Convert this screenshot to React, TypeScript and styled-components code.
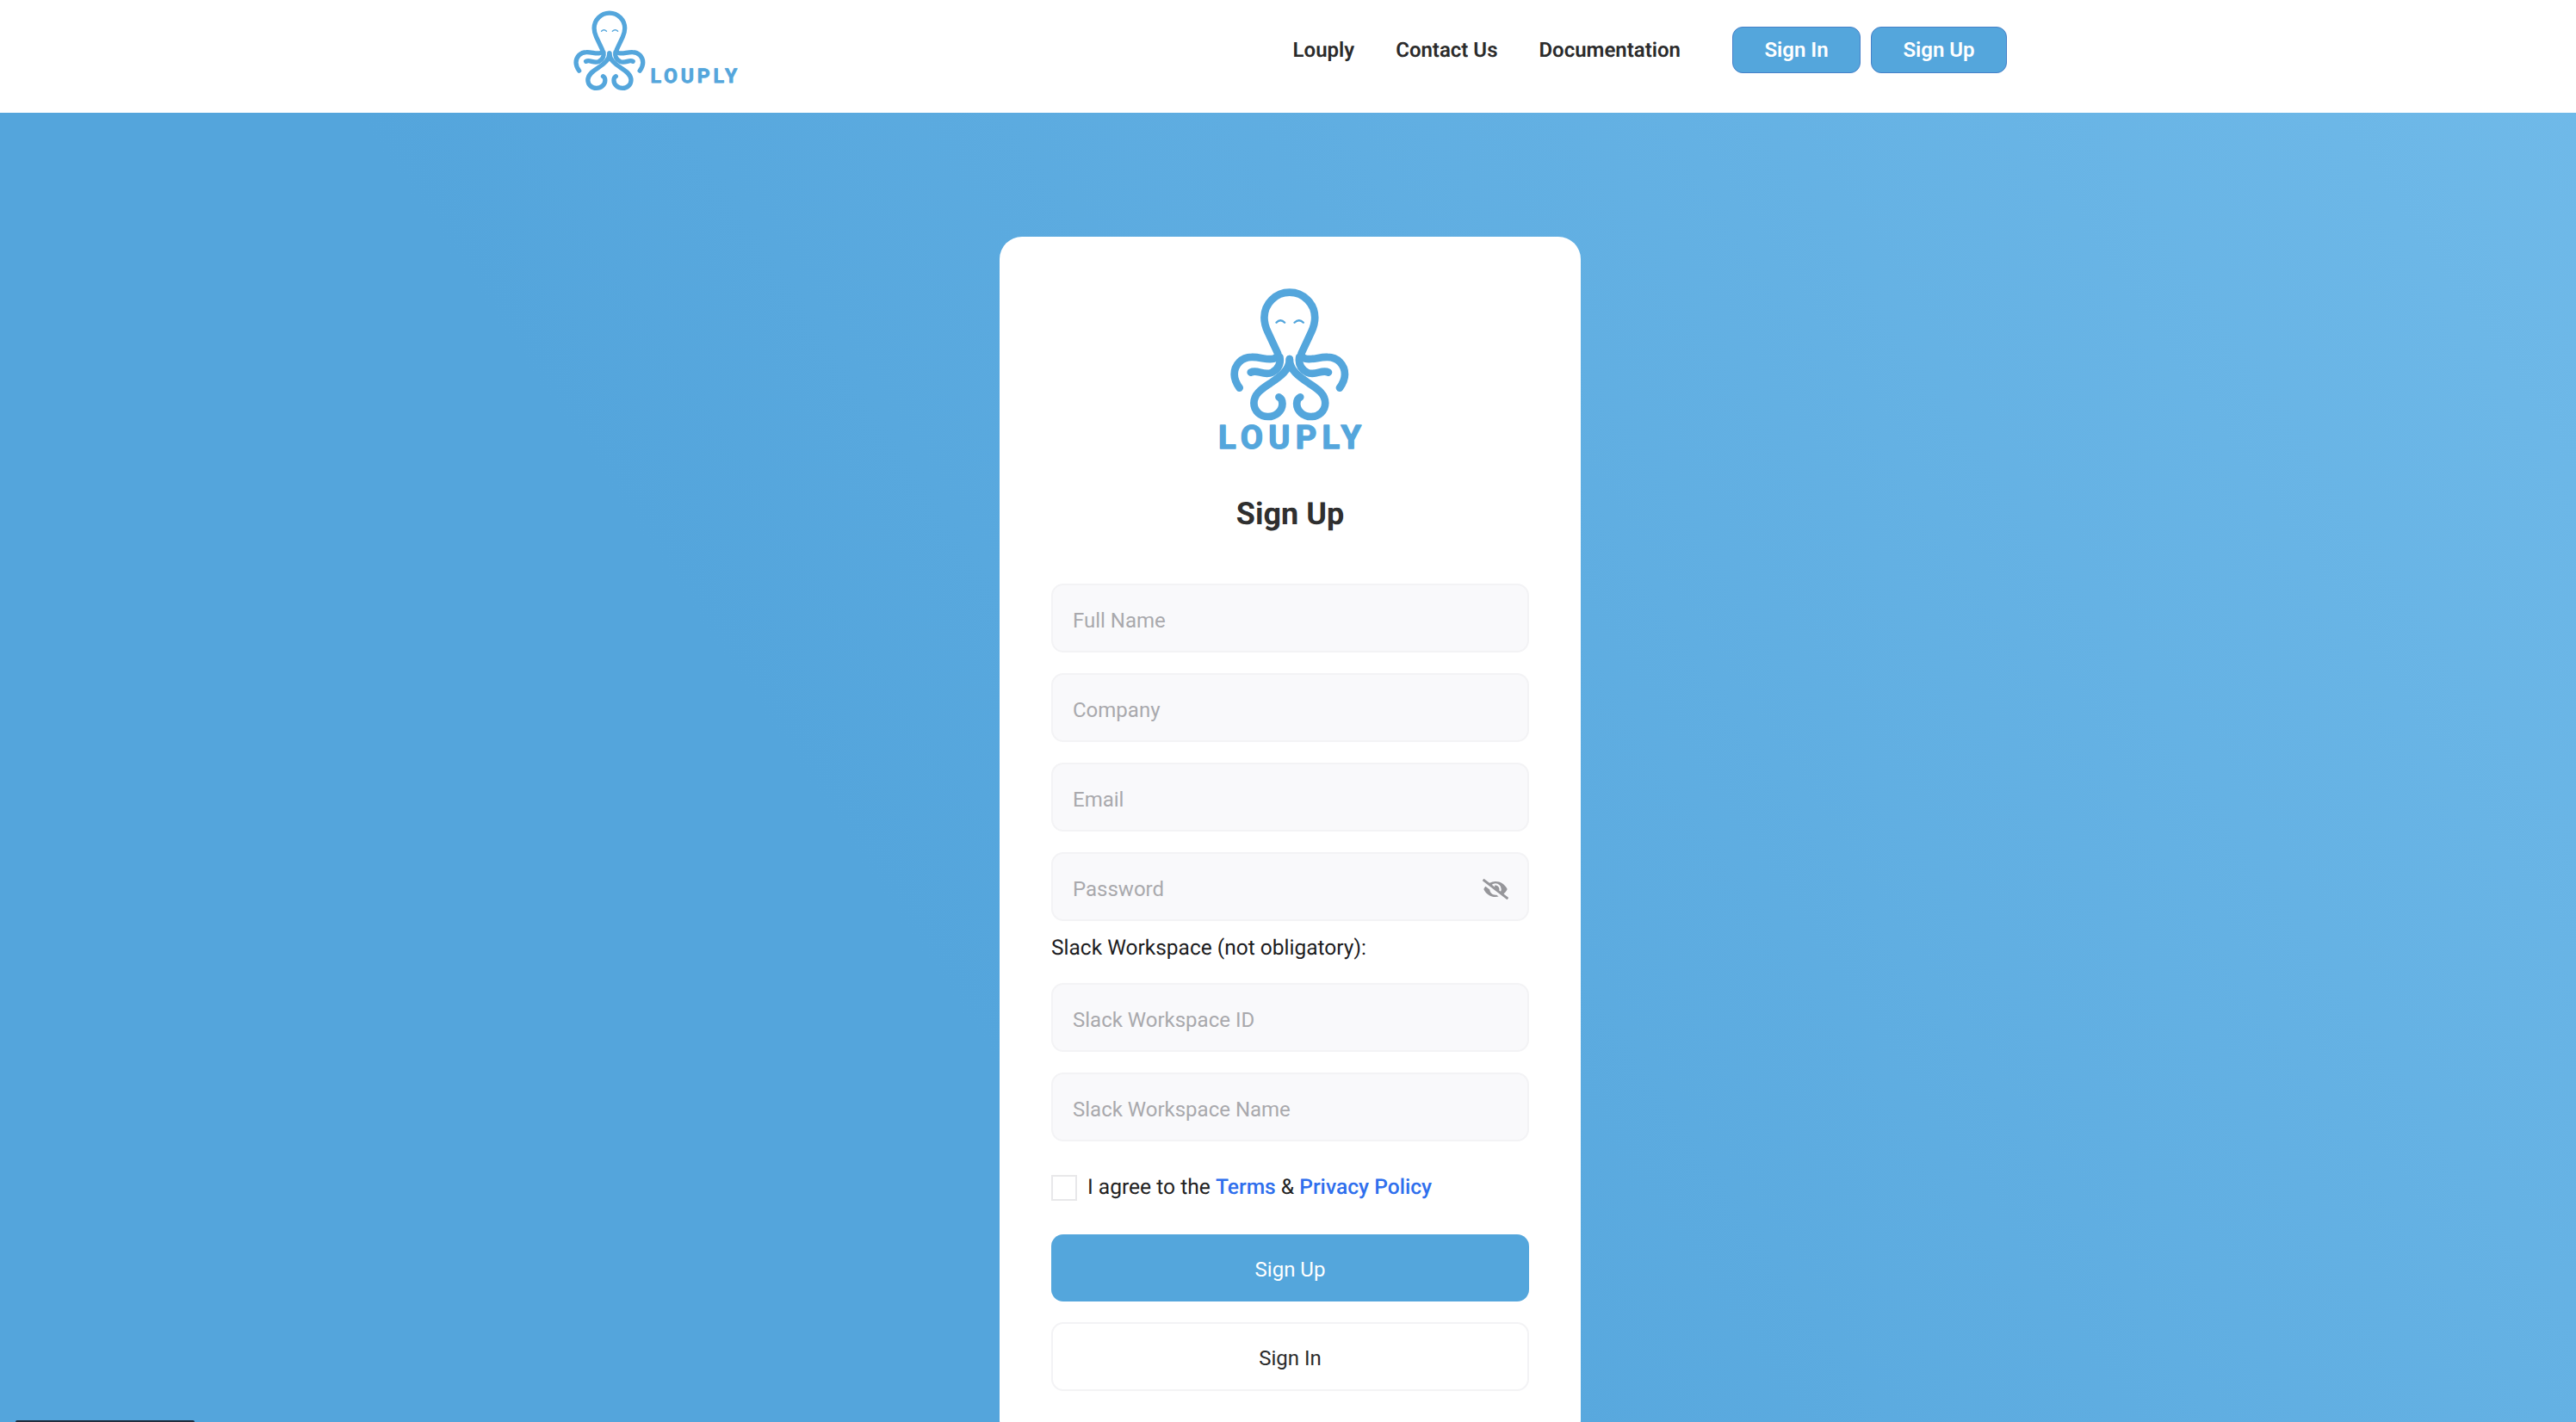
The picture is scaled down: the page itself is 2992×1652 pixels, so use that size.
import React from "react";
import styled, { createGlobalStyle } from "styled-components";
import { FaEyeSlash } from "react-icons/fa";

const BLUE = "#54a6dc";

const Global = createGlobalStyle`
  html, body { margin: 0; padding: 0; height: 100%; overflow: hidden; }
  body { font-family: Roboto, "Liberation Sans", sans-serif; background: ${BLUE}; text-rendering: geometricPrecision; }
  * { box-sizing: border-box; }
`;

const Page = styled.div`
  position: relative;
  height: 1652px;
  overflow: hidden;
  display: flex;
  flex-direction: column;
  background: linear-gradient(56deg, #54a5dc 0%, #54a5dc 35%, #70bae9 100%);
`;

const Header = styled.header`
  flex: none;
  height: 131px;
  background: #fff;
  display: flex;
  align-items: flex-start;
  padding: 0 661px 0 665px;
`;

const Brand = styled.a`
  display: flex;
  align-items: flex-end;
  gap: 2px;
  margin-top: 11px;
  height: 96px;
`;

const BrandWord = styled.span`
  display: block;
  margin-bottom: 10px;
`;

const Nav = styled.nav`
  margin-left: auto;
  display: flex;
  align-items: center;
  height: 116px;
`;

const NavLink = styled.a`
  font-size: 24px;
  font-weight: 600;
  color: #2b2b2b;
  margin-right: 48px;
  &:last-of-type { margin-right: 60px; }
`;

const NavButton = styled.button<{ $w: number }>`
  height: 54px;
  width: ${(p) => p.$w}px;
  margin-left: ${(p) => (p.$w > 150 ? 12 : 0)}px;
  background: ${BLUE};
  color: #fff;
  border: 1.5px solid #4580c8;
  border-radius: 12px;
  font: 600 24px Roboto, sans-serif;
`;

const Main = styled.main`
  flex: 1;
  display: flex;
  justify-content: center;
  padding: 144px 0 0 5px;
`;

const Card = styled.section`
  flex: none;
  width: 675px;
  height: 1400px;
  background: #fff;
  border-radius: 26px;
  padding: 58px 60px 0;
  display: flex;
  flex-direction: column;
`;

const CardLogo = styled.div`
  display: flex;
  flex-direction: column;
  align-items: center;
  gap: 2px;
  padding-right: 2px;
`;

const Title = styled.h1`
  margin: 53px 0 0;
  text-align: center;
  font-size: 36px;
  line-height: 44px;
  font-weight: 700;
  color: #2f2f2f;
`;

const Form = styled.form`
  margin-top: 59px;
  display: flex;
  flex-direction: column;
`;

const Field = styled.div`
  position: relative;
  height: 80px;
  margin-bottom: 24px;
  &.tight { margin-bottom: 0; }
`;

const Input = styled.input`
  width: 100%;
  height: 100%;
  padding: 6px 23px 0;
  background: #f9f9fb;
  border: 2px solid #f3f3f5;
  border-radius: 14px;
  font: 400 24px Roboto, sans-serif;
  color: #222;
  &::placeholder { color: #a9a9ad; opacity: 1; }
`;

const EyeButton = styled.span`
  position: absolute;
  right: 24px;
  top: 31px;
  display: flex;
  color: #96969a;
  & svg { width: 30px; height: 24px; }
`;

const SectionLabel = styled.div`
  font-size: 24.5px;
  line-height: 30px;
  color: #1d1d1f;
  margin: 16px 0 26px;
`;

const AgreeRow = styled.label`
  display: flex;
  align-items: center;
  gap: 12px;
  margin: 39px 0 39px;
  font-size: 24.6px;
  line-height: 30px;
  color: #222;
`;

const Check = styled.input`
  appearance: none;
  width: 30px;
  height: 30px;
  margin: 0;
  background: #fff;
  border: 2px solid #e8e8ea;
`;

const TextLink = styled.a`
  color: #2f6fed;
  font-weight: 500;
`;

const PrimaryButton = styled.button`
  height: 78px;
  padding-top: 6px;
  background: ${BLUE};
  color: #fff;
  border: 0;
  border-radius: 14px;
  font: 400 24px Roboto, sans-serif;
`;

const SecondaryButton = styled.button`
  height: 80px;
  margin-top: 24px;
  padding-top: 6px;
  background: #fff;
  color: #2b2b2b;
  border: 2px solid #f3f3f5;
  border-radius: 14px;
  font: 400 24px Roboto, sans-serif;
`;

const CornerBar = styled.div`
  position: absolute;
  left: 18px;
  bottom: 0;
  width: 208px;
  height: 2px;
  background: #1f2d3d;
  border-radius: 3px 3px 0 0;
`;

const Octopus = ({ width }: { width: number }) => (
  <svg width={width} viewBox="140 40 425 475" fill="none" stroke={BLUE} strokeWidth="26" strokeLinecap="round" strokeLinejoin="round">
    <path d="M178 392C168 378 160 362 160 345C160 312 185 285 220 285C250 284 272 296 296 291C305 289 312 283 311 272L276 197C268 180 264 165 264 148C264 100 303 60 352 60C401 60 440 100 440 148C440 165 436 180 428 197L393 272C392 283 399 289 408 291C432 296 454 284 484 285C519 285 544 312 544 345C544 362 536 378 526 392" />
    <path d="M217 338C240 326 262 352 292 338C310 328 322 310 318 285" />
    <path d="M487 338C464 326 442 352 412 338C394 328 382 310 386 285" />
    <path d="M352 292C352 330 320 352 285 376C250 398 228 416 228 445C228 472 250 492 277 492C304 492 327 472 327 447C327 436 323 428 315 424" />
    <path d="M352 292C352 330 384 352 419 376C454 398 476 416 476 445C476 472 454 492 427 492C400 492 377 472 377 447C377 436 381 428 389 424" />
    <path d="M306 165Q320 150 335 165M369 165Q385 150 400 165" strokeWidth="7" />
  </svg>
);

const Wordmark = ({ w, h }: { w: number; h: number }) => (
  <svg width={w} height={h} viewBox="0 0 167 28" style={{ display: "block", overflow: "visible" }}>
    <text x="1" y="27" textLength="166" lengthAdjust="spacing" fontFamily="Roboto, sans-serif" fontWeight="700" fontSize="38" fill={BLUE} stroke={BLUE} strokeWidth="1.4" strokeLinejoin="round">LOUPLY</text>
  </svg>
);

export default function App() {
  return (
    <Page>
      <Global />
      <Header>
        <Brand>
          <Octopus width={86} />
          <BrandWord><Wordmark w={105} h={17} /></BrandWord>
        </Brand>
        <Nav>
          <NavLink>Louply</NavLink>
          <NavLink>Contact Us</NavLink>
          <NavLink>Documentation</NavLink>
          <NavButton $w={149}>Sign In</NavButton>
          <NavButton $w={158}>Sign Up</NavButton>
        </Nav>
      </Header>
      <Main>
        <Card>
          <CardLogo>
            <Octopus width={142} />
            <Wordmark w={167} h={28} />
          </CardLogo>
          <Title>Sign Up</Title>
          <Form>
            <Field><Input placeholder="Full Name" /></Field>
            <Field><Input placeholder="Company" /></Field>
            <Field><Input placeholder="Email" /></Field>
            <Field className="tight">
              <Input placeholder="Password" type="password" />
              <EyeButton><FaEyeSlash /></EyeButton>
            </Field>
            <SectionLabel>Slack Workspace (not obligatory):</SectionLabel>
            <Field><Input placeholder="Slack Workspace ID" /></Field>
            <Field className="tight"><Input placeholder="Slack Workspace Name" /></Field>
            <AgreeRow>
              <Check type="checkbox" />
              <span>I agree to the <TextLink>Terms</TextLink> &amp; <TextLink>Privacy Policy</TextLink></span>
            </AgreeRow>
            <PrimaryButton type="button">Sign Up</PrimaryButton>
            <SecondaryButton type="button">Sign In</SecondaryButton>
          </Form>
        </Card>
      </Main>
      <CornerBar />
    </Page>
  );
}
